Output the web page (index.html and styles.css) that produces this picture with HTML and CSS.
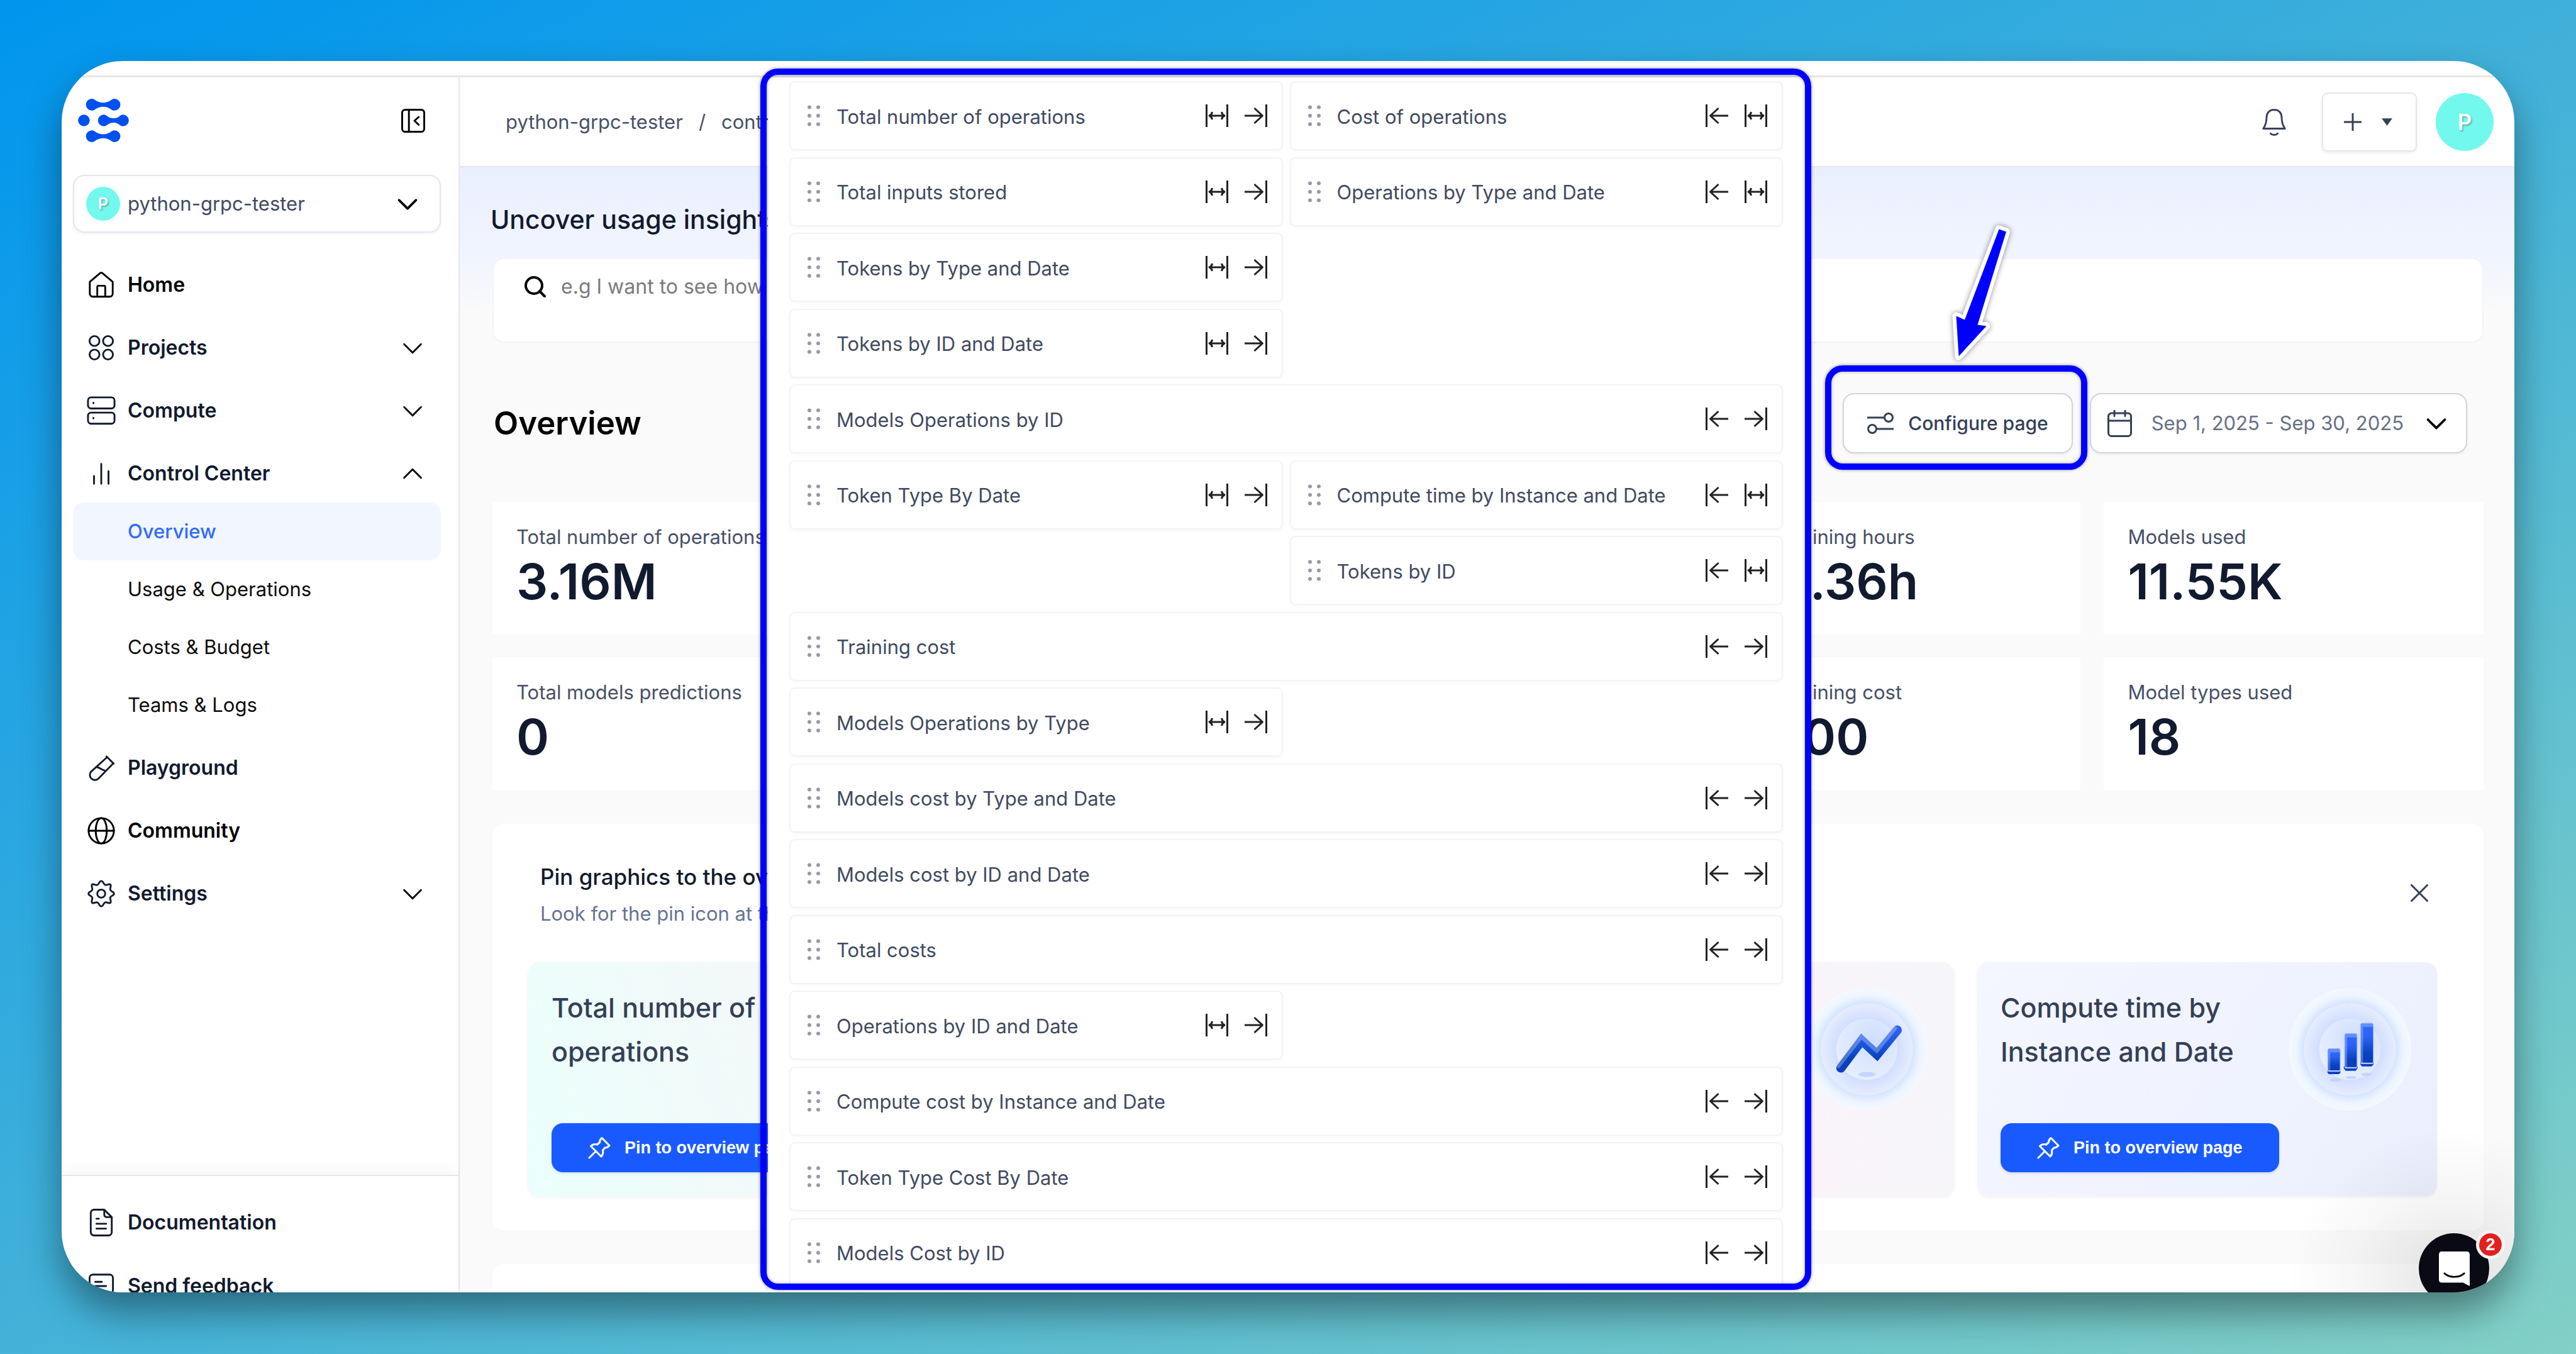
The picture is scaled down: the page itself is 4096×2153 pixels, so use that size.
FILE: index.html
```html
<!DOCTYPE html>
<html lang="en">
<head>
<meta charset="utf-8">
<meta name="viewport" content="width=device-width, initial-scale=1">
<title>Control Center – Overview</title>
<link rel="stylesheet" href="styles.css">
</head>
<body>
<svg class="sprite" aria-hidden="true">
  <symbol id="i-down" viewBox="0 0 24 24"><path d="M5 9l7 7 7-7"/></symbol>
  <symbol id="i-up" viewBox="0 0 24 24"><path d="M5 15.500l7-7 7 7"/></symbol>
  <symbol id="i-grip" viewBox="0 0 20 34"><g fill="#959aa4" stroke="none"><circle cx="3" cy="3.500" r="3"/><circle cx="17" cy="3.500" r="3"/><circle cx="3" cy="17" r="3"/><circle cx="17" cy="17" r="3"/><circle cx="3" cy="30.500" r="3"/><circle cx="17" cy="30.500" r="3"/></g></symbol>
  <symbol id="i-wide" viewBox="0 0 36 36"><path d="M1.500 0v36M34.500 0v36M6 18h24M10.500 12c-.5 3-2 5-4.500 6c2.500 1 4 3 4.500 6M25.500 12c.5 3 2 5 4.500 6c-2.500 1-4 3-4.500 6"/></symbol>
  <symbol id="i-right" viewBox="0 0 36 36"><path d="M34.500 0v36M0 18h28.500M15.500 6l13 12-13 12"/></symbol>
  <symbol id="i-left" viewBox="0 0 36 36"><path d="M1.500 0v36M36 18H7.500M20.500 6l-13 12 13 12"/></symbol>
  <symbol id="i-pin" viewBox="0 0 36 36"><path d="M2 34l9-9M22 2.500l12 12c-2 2.500-4.500 3.500-7 3.500l-3.500 4c.8 4.500 0 7.500-2.500 10L4.500 15.500c2.500-2.500 6-3.500 10-2.500L18.500 9.500c0-3 1.500-5.500 3.500-7z"/></symbol>
</svg>

<div class="desktop">
  <div class="window">
    <div class="strip"></div>
    <div class="app">

      <aside class="sidebar">
        <div class="brand">
          <a href="#" aria-label="Home page">
            <svg class="logo" viewBox="0 0 83 71">
              <path d="M22.500 0C28 0 30 6.500 41 6.500S54 0 59.500 0a9.700 9.700 0 0 1 0 19.400C54 19.400 52 13 41 13s-13 6.400-18.500 6.400a9.700 9.700 0 0 1 0-19.400z"/>
              <circle cx="9.500" cy="35.500" r="9.500"/>
              <path d="M42 26C47.500 26 48.500 32 58 32s10-6 15.500-6a9.500 9.500 0 0 1 0 19C68 45 67 39 58 39s-10.500 6-16 6a9.500 9.500 0 0 1 0-19z"/>
              <path d="M22.500 51.600c5.500 0 7.500 6.500 18.500 6.500s13-6.500 18.500-6.500a9.700 9.700 0 0 1 0 19.400C54 71 52 64.600 41 64.600S28 71 22.500 71a9.700 9.700 0 0 1 0-19.400z"/>
            </svg>
          </a>
          <button class="plain" aria-label="Collapse sidebar">
            <svg class="collapse" viewBox="0 0 39 39"><rect x="1.500" y="1.500" width="36" height="36" rx="5"/><path d="M12.500 2v35M28.500 13.500l-7 6 7 6.500"/></svg>
          </button>
        </div>

        <label class="workspace">
          <span class="avatar small">P</span>
          <select aria-label="Workspace"><option>python-grpc-tester</option></select>
          <svg class="icon bold"><use href="#i-down"/></svg>
        </label>

        <nav class="nav">
          <a class="nav-item ink" href="#"><svg class="icon" viewBox="0 0 24 24"><path d="M2.500 9.500v9.700c0 1.500 1 2.600 2.600 2.600h13.800c1.600 0 2.600-1.100 2.600-2.600V9.500L13 2.300q-1-.8-2 0zM8.700 21.800v-8.200q0-.9.900-.9h4.800q.9 0 .9.900v8.200"/></svg><span>Home</span></a>
          <button class="nav-item"><svg class="icon" viewBox="0 0 24 24"><circle cx="6.400" cy="6.400" r="4.100"/><circle cx="17.600" cy="6.400" r="4.100"/><circle cx="6.400" cy="17.600" r="4.100"/><circle cx="17.600" cy="17.600" r="4.100"/></svg><span>Projects</span><svg class="icon ink"><use href="#i-down"/></svg></button>
          <button class="nav-item"><svg class="icon" viewBox="0 0 24 24"><rect x="1" y="1" width="22" height="9.200" rx="2.600"/><rect x="1" y="13.600" width="22" height="9.200" rx="2.600"/><path d="M5.500 5.500v.4M5.500 18v.4"/></svg><span>Compute</span><svg class="icon ink"><use href="#i-down"/></svg></button>
          <div class="nav-group">
            <button class="nav-item"><svg class="icon" viewBox="0 0 24 24"><path d="M6 14v6.500M12 4v16.500M18 10v10.500"/></svg><span>Control Center</span><svg class="icon ink"><use href="#i-up"/></svg></button>
            <a class="nav-sub current" href="#">Overview</a>
            <a class="nav-sub" href="#">Usage &amp; Operations</a>
            <a class="nav-sub" href="#">Costs &amp; Budget</a>
            <a class="nav-sub" href="#">Teams &amp; Logs</a>
          </div>
          <a class="nav-item" href="#"><svg class="icon" viewBox="0 0 24 24"><path d="M16.300 2.500l6 6M17 3L3.500 15.200a4.200 4.200 0 0 0 5.800 6L22 8.200M8.500 11.500c2 0 3 1.800 6 2.500"/></svg><span>Playground</span></a>
          <a class="nav-item ink" href="#"><svg class="icon" viewBox="0 0 24 24"><circle cx="12" cy="12" r="10.500"/><ellipse cx="12" cy="12" rx="4.600" ry="10.500"/><path d="M1.500 12h21"/></svg><span>Community</span></a>
          <button class="nav-item"><svg class="icon" viewBox="0 0 24 24"><path d="M12 1.500c1.700 0 1.700 2.600 3.200 3.200s3.300-1.300 4.400-.2-.7 2.900-.1 4.400 3.100 1.400 3.100 3.100-2.500 1.600-3.100 3.100 1.200 3.300.1 4.400-2.900-.8-4.400-.2-1.500 3.200-3.200 3.200-1.700-2.600-3.200-3.200-3.300 1.300-4.400.2.700-2.900.1-4.400-3.100-1.400-3.100-3.100 2.500-1.600 3.100-3.100-1.200-3.300-.1-4.400 2.900.8 4.400.2S10.300 1.500 12 1.500z"/><circle cx="12" cy="12" r="3.300"/></svg><span>Settings</span><svg class="icon ink"><use href="#i-down"/></svg></button>
        </nav>

        <div class="nav-footer">
          <a class="nav-item" href="#"><svg class="icon" viewBox="0 0 24 24"><path d="M14.500 1.300H6A2.700 2.700 0 0 0 3.300 4v16A2.700 2.700 0 0 0 6 22.700h12a2.700 2.700 0 0 0 2.700-2.700V7.500zM14.500 1.500v4a2 2 0 0 0 2 2h4M8 8.800h2M8 13h8M8 17h8"/></svg><span>Documentation</span></a>
          <a class="nav-item" href="#"><svg class="icon" viewBox="0 0 24 24"><path d="M5 2.500h14a2.700 2.700 0 0 1 2.700 2.700v10a2.700 2.700 0 0 1-2.700 2.700h-6l-4.500 4v-4H5a2.700 2.700 0 0 1-2.700-2.700v-10A2.700 2.700 0 0 1 5 2.500zM7 8.500h5.500M7 12h9"/></svg><span>Send feedback</span></a>
        </div>
      </aside>

      <div class="content">
        <header class="topbar">
          <nav class="crumbs" aria-label="Breadcrumb"><a href="#">python-grpc-tester</a><span>/</span><a href="#">control-center</a></nav>
          <div class="top-actions">
            <button class="plain" aria-label="Notifications">
              <svg class="icon" viewBox="0 0 24 24"><path d="M12 1.800c-4.200 0-6.300 3-6.300 6.800 0 4.400-1 6.400-2.700 8.900h18c-1.700-2.500-2.700-4.500-2.700-8.900 0-3.800-2.100-6.800-6.300-6.800zM9 21.500c1.500 1.600 4.500 1.600 6 0"/></svg>
            </button>
            <button class="add" aria-label="Create new">
              <svg class="plus" viewBox="0 0 28 28"><path d="M14 0v28M0 14h28"/></svg>
              <svg class="caret" viewBox="0 0 18 12"><path d="M0 0h18L9 12z"/></svg>
            </button>
            <button class="plain" aria-label="Account"><span class="avatar large">P</span></button>
          </div>
        </header>

        <main class="page">
          <section class="ask">
            <h2>Uncover usage insights in seconds</h2>
            <label class="search">
              <svg viewBox="0 0 34 34"><circle cx="15" cy="15" r="13"/><path d="M24 24l8 8"/></svg>
              <textarea rows="1" placeholder="e.g I want to see how many operations ran last month" aria-label="Search usage"></textarea>
            </label>
          </section>

          <div class="toolbar">
            <h1>Overview</h1>
            <div class="tools">
              <button class="tool configure">
                <svg class="sliders" viewBox="0 0 42 34"><circle cx="34" cy="8" r="6.500"/><path d="M0 8h27"/><circle cx="8" cy="26" r="6.500"/><path d="M15 26h27"/></svg>
                <span>Configure page</span>
              </button>
              <button class="tool range">
                <svg class="calendar" viewBox="0 0 39 43"><rect x="1.500" y="5" width="36" height="36.500" rx="5"/><path d="M1.500 17h36M11 0v9.500M28 0v9.500"/></svg>
                <span>Sep 1, 2025 - Sep 30, 2025</span>
                <svg class="icon bold ink"><use href="#i-down"/></svg>
              </button>
            </div>
          </div>

          <section class="stats" aria-label="Key figures">
            <article class="stat"><p>Total number of operations</p><strong>3.16M</strong></article>
            <article class="stat"></article>
            <article class="stat"></article>
            <article class="stat"><p>Model training hours</p><strong>148.36h</strong></article>
            <article class="stat"><p>Models used</p><strong>11.55K</strong></article>
            <article class="stat"><p>Total models predictions</p><strong>0</strong></article>
            <article class="stat"></article>
            <article class="stat"></article>
            <article class="stat"><p>Model training cost</p><strong>$0.00</strong></article>
            <article class="stat"><p>Model types used</p><strong>18</strong></article>
          </section>

          <section class="pins">
            <div class="pins-head">
              <div>
                <h3>Pin graphics to the overview page</h3>
                <p>Look for the pin icon at the top of each graphic</p>
              </div>
              <button class="dismiss" aria-label="Dismiss"><svg class="close" viewBox="0 0 28 28"><path d="M1.500 1.500l25 25M26.500 1.500l-25 25"/></svg></button>
            </div>
            <div class="pin-cards">
              <article class="pin-card mint">
                <div class="pin-top"><h4>Total number of operations</h4></div>
                <button class="pin-button"><svg><use href="#i-pin"/></svg><span>Pin to overview page</span></button>
              </article>
              <article class="pin-card mint"></article>
              <article class="pin-card rose">
                <div class="pin-top">
                  <h4></h4>
                  <svg class="art" viewBox="0 0 200 200">
                    <defs>
                      <radialGradient id="ring-outer"><stop offset=".74" stop-color="#d3e3ff"/><stop offset=".88" stop-color="#eef5ff"/><stop offset="1" stop-color="#f4f9ff"/></radialGradient>
                      <radialGradient id="ring-mid"><stop offset=".62" stop-color="#cfdcff"/><stop offset="1" stop-color="#e6edff"/></radialGradient>
                      <radialGradient id="ring-core" cx=".6" cy=".35" r=".9"><stop offset="0" stop-color="#cfdeff"/><stop offset=".7" stop-color="#e6edff"/><stop offset="1" stop-color="#e2eaff"/></radialGradient>
                      <linearGradient id="blue" x1="0" y1="0" x2="0" y2="1"><stop offset="0" stop-color="#3069ff"/><stop offset=".35" stop-color="#2b62f5"/><stop offset=".75" stop-color="#0a40c0"/><stop offset="1" stop-color="#0a3db4"/></linearGradient>
                      <linearGradient id="trend" x1="0" y1="0" x2="0" y2="1"><stop offset="0" stop-color="#2d62ee"/><stop offset=".5" stop-color="#1550d6"/><stop offset=".75" stop-color="#0840bd"/></linearGradient>
                    </defs>
                    <circle cx="100" cy="100" r="100" fill="url(#ring-outer)"/>
                    <circle cx="100" cy="100" r="75" fill="url(#ring-mid)"/>
                    <circle cx="100" cy="100" r="50" fill="url(#ring-core)"/>
                    <ellipse cx="100" cy="141" rx="14" ry="4" fill="#c3d5fa"/>
                    <path d="M57.500 130.500L91.500 85.500 116.500 108.500 149.500 68.500" fill="none" stroke="url(#trend)" stroke-width="15" stroke-linecap="round" stroke-linejoin="miter" stroke-miterlimit="10"/>
                    <path d="M53.500 127.500L91 79.500 116 102.500 146 65.500" fill="none" stroke="#fff" stroke-opacity=".28" stroke-width="6.500" stroke-linecap="round" stroke-linejoin="miter" stroke-miterlimit="10"/>
                  </svg>
                </div>
              </article>
              <article class="pin-card sky">
                <div class="pin-top">
                  <h4>Compute time by Instance and Date</h4>
                  <svg class="art" viewBox="0 0 200 200">
                    <circle cx="100" cy="100" r="100" fill="url(#ring-outer)"/>
                    <circle cx="100" cy="100" r="75" fill="url(#ring-mid)"/>
                    <circle cx="100" cy="100" r="50" fill="url(#ring-core)"/>
                    <g fill="#c3d5fa"><ellipse cx="76" cy="150" rx="9" ry="3"/><ellipse cx="102" cy="146" rx="9" ry="2.500"/><ellipse cx="127" cy="141" rx="9" ry="2.500"/></g>
                    <g fill="#0a40c8"><path d="M63.500 135h21v3l-2 2.500h-17l-2-2.500z"/><path d="M90 128h22.500v3l-3 4h-16.500l-3-4z"/><path d="M117 121.500h21.500v3l-3 3.500h-16l-2.500-3.500z"/></g>
                    <g fill="url(#blue)" stroke="#7ea2ff" stroke-width="1"><rect x="64" y="99" width="20" height="37" rx="2.500"/><rect x="91.500" y="74.500" width="20" height="56" rx="2.500"/><rect x="117.500" y="57.500" width="20.500" height="66" rx="2.500"/></g>
                    <g fill="#fff" fill-opacity=".25"><path d="M64 136v-34q0-3 3-3h14q3 0 3 3v3H68v31z"/><path d="M91.500 130V77.500q0-3 3-3h14q3 0 3 3v3h-16V130z"/><path d="M117.500 123V60.500q0-3 3-3h14.500q3 0 3 3v3h-16.500V123z"/></g>
                    <path d="M65 135.300h18M92.500 130h18M118.500 122.800h18.500" stroke="#b9ccff" stroke-width="2"/>
                  </svg>
                </div>
                <button class="pin-button"><svg><use href="#i-pin"/></svg><span>Pin to overview page</span></button>
              </article>
            </div>
          </section>

          <section class="next-panel"></section>
        </main>
      </div>

      <div class="layout-panel" role="dialog" aria-label="Configure page">
        <ul class="tiles">
          <li class="tile"><svg class="grip"><use href="#i-grip"/></svg><span>Total number of operations</span><button aria-label="Full width"><svg><use href="#i-wide"/></svg></button><button aria-label="Move right"><svg><use href="#i-right"/></svg></button></li>
          <li class="tile second"><svg class="grip"><use href="#i-grip"/></svg><span>Cost of operations</span><button aria-label="Move left"><svg><use href="#i-left"/></svg></button><button aria-label="Full width"><svg><use href="#i-wide"/></svg></button></li>
          <li class="tile"><svg class="grip"><use href="#i-grip"/></svg><span>Total inputs stored</span><button aria-label="Full width"><svg><use href="#i-wide"/></svg></button><button aria-label="Move right"><svg><use href="#i-right"/></svg></button></li>
          <li class="tile second"><svg class="grip"><use href="#i-grip"/></svg><span>Operations by Type and Date</span><button aria-label="Move left"><svg><use href="#i-left"/></svg></button><button aria-label="Full width"><svg><use href="#i-wide"/></svg></button></li>
          <li class="tile"><svg class="grip"><use href="#i-grip"/></svg><span>Tokens by Type and Date</span><button aria-label="Full width"><svg><use href="#i-wide"/></svg></button><button aria-label="Move right"><svg><use href="#i-right"/></svg></button></li>
          <li class="tile"><svg class="grip"><use href="#i-grip"/></svg><span>Tokens by ID and Date</span><button aria-label="Full width"><svg><use href="#i-wide"/></svg></button><button aria-label="Move right"><svg><use href="#i-right"/></svg></button></li>
          <li class="tile full"><svg class="grip"><use href="#i-grip"/></svg><span>Models Operations by ID</span><button aria-label="Move left"><svg><use href="#i-left"/></svg></button><button aria-label="Move right"><svg><use href="#i-right"/></svg></button></li>
          <li class="tile"><svg class="grip"><use href="#i-grip"/></svg><span>Token Type By Date</span><button aria-label="Full width"><svg><use href="#i-wide"/></svg></button><button aria-label="Move right"><svg><use href="#i-right"/></svg></button></li>
          <li class="tile second"><svg class="grip"><use href="#i-grip"/></svg><span>Compute time by Instance and Date</span><button aria-label="Move left"><svg><use href="#i-left"/></svg></button><button aria-label="Full width"><svg><use href="#i-wide"/></svg></button></li>
          <li class="tile second"><svg class="grip"><use href="#i-grip"/></svg><span>Tokens by ID</span><button aria-label="Move left"><svg><use href="#i-left"/></svg></button><button aria-label="Full width"><svg><use href="#i-wide"/></svg></button></li>
          <li class="tile full"><svg class="grip"><use href="#i-grip"/></svg><span>Training cost</span><button aria-label="Move left"><svg><use href="#i-left"/></svg></button><button aria-label="Move right"><svg><use href="#i-right"/></svg></button></li>
          <li class="tile"><svg class="grip"><use href="#i-grip"/></svg><span>Models Operations by Type</span><button aria-label="Full width"><svg><use href="#i-wide"/></svg></button><button aria-label="Move right"><svg><use href="#i-right"/></svg></button></li>
          <li class="tile full"><svg class="grip"><use href="#i-grip"/></svg><span>Models cost by Type and Date</span><button aria-label="Move left"><svg><use href="#i-left"/></svg></button><button aria-label="Move right"><svg><use href="#i-right"/></svg></button></li>
          <li class="tile full"><svg class="grip"><use href="#i-grip"/></svg><span>Models cost by ID and Date</span><button aria-label="Move left"><svg><use href="#i-left"/></svg></button><button aria-label="Move right"><svg><use href="#i-right"/></svg></button></li>
          <li class="tile full"><svg class="grip"><use href="#i-grip"/></svg><span>Total costs</span><button aria-label="Move left"><svg><use href="#i-left"/></svg></button><button aria-label="Move right"><svg><use href="#i-right"/></svg></button></li>
          <li class="tile"><svg class="grip"><use href="#i-grip"/></svg><span>Operations by ID and Date</span><button aria-label="Full width"><svg><use href="#i-wide"/></svg></button><button aria-label="Move right"><svg><use href="#i-right"/></svg></button></li>
          <li class="tile full"><svg class="grip"><use href="#i-grip"/></svg><span>Compute cost by Instance and Date</span><button aria-label="Move left"><svg><use href="#i-left"/></svg></button><button aria-label="Move right"><svg><use href="#i-right"/></svg></button></li>
          <li class="tile full"><svg class="grip"><use href="#i-grip"/></svg><span>Token Type Cost By Date</span><button aria-label="Move left"><svg><use href="#i-left"/></svg></button><button aria-label="Move right"><svg><use href="#i-right"/></svg></button></li>
          <li class="tile full"><svg class="grip"><use href="#i-grip"/></svg><span>Models Cost by ID</span><button aria-label="Move left"><svg><use href="#i-left"/></svg></button><button aria-label="Move right"><svg><use href="#i-right"/></svg></button></li>
        </ul>
      </div>

      <div class="chat">
        <button class="launcher" aria-label="Open chat">
          <svg viewBox="0 0 50 56"><path class="bubble" d="M5 0h40q5 0 5 5v51l-11-5.500H5q-5 0-5-5V5q0-5 5-5z"/><path class="smile" d="M9 35.500c9 7.500 23 7.500 32 0"/></svg>
        </button>
        <span class="badge">2</span>
      </div>
    </div>
  </div>

  <div class="frame frame-panel"></div>
  <div class="frame frame-button"></div>
  <svg class="arrow" viewBox="0 0 110 230">
    <path d="M80.500 14.500L92 18.500 46.500 166.500 60.500 168.500 16.500 216.500 12.500 152.500 26 158.500z" fill="#00f" stroke="#fff" stroke-width="12" stroke-linejoin="round" paint-order="stroke"/>
  </svg>
</div>
</body>
</html>
```

FILE: styles.css
```css
*, *::before, *::after { box-sizing: border-box; }

body {
  margin: 0;
  font: 400 31px/46px Inter, "Liberation Sans", sans-serif;
  color: #344056;
}

h1, h2, h3, h4, p, ul { margin: 0; padding: 0; }
ul { list-style: none; }
a { color: inherit; text-decoration: none; }
button {
  margin: 0;
  padding: 0;
  border: 0;
  background: none;
  font: inherit;
  color: inherit;
  text-align: left;
  cursor: pointer;
}
svg {
  display: block;
  flex: none;
  fill: none;
  stroke: currentColor;
  stroke-linecap: round;
  stroke-linejoin: round;
}
.sprite { position: absolute; width: 0; height: 0; }
.plain { flex: none; }
.ink { color: #000; }

.icon { width: 46px; height: 46px; stroke-width: 1.5; }
.icon.bold { stroke-width: 2; }

/* backdrop */
.desktop {
  position: relative;
  height: 100vh;
  padding: 97px 98px 98px;
  overflow: hidden;
  background: linear-gradient(154deg, #0095ee, #41b1d9 50%, #82d0c6);
}
.window {
  display: flex;
  flex-direction: column;
  height: 100%;
  overflow: hidden;
  border-radius: 97px;
  background: #fff;
  box-shadow: 0 32px 60px rgba(0, 0, 0, .4);
}
.strip { flex: none; height: 26px; border-bottom: 3px solid #e4e4e4; }
.app { position: relative; display: flex; flex: 1; min-height: 0; }

/* sidebar */
.sidebar {
  display: flex;
  flex-direction: column;
  flex: none;
  width: 633px;
  border-right: 2px solid #e5e6ec;
}
.brand {
  display: flex;
  align-items: center;
  justify-content: space-between;
  padding: 34px 53px 0 26px;
}
.logo { width: 81px; height: 69px; fill: #0050f0; stroke: none; }
.collapse { width: 38px; height: 38px; stroke-width: 3; color: #000; }

.workspace {
  display: flex;
  align-items: center;
  gap: 12px;
  height: 92px;
  margin: 52px 28px 0 18px;
  padding: 0 28px 0 19px;
  border: 2px solid #e5e6ef;
  border-radius: 18px;
  box-shadow: 0 2px 4px rgba(16, 24, 40, .05);
  color: #000;
}
.workspace select {
  flex: 1;
  min-width: 0;
  padding: 0;
  border: 0;
  appearance: none;
  background: none;
  font: inherit;
  color: #3f4a60;
}
.avatar {
  display: grid;
  place-items: center;
  border-radius: 50%;
  background: #73f8ee;
  color: #fff;
  font-weight: 600;
  text-shadow: 2px 2px 2px rgba(0, 0, 0, .25);
}
.avatar.small { width: 54px; height: 54px; font-size: 26px; }
.avatar.large { width: 92px; height: 92px; font-size: 35px; }

.nav {
  display: flex;
  flex-direction: column;
  flex: 1;
  gap: 8px;
  min-height: 0;
  margin: 37px 28px 0 18px;
}
.nav-item {
  display: flex;
  align-items: center;
  gap: 19px;
  width: 100%;
  height: 92px;
  padding: 0 22px;
  font-size: 32px;
  font-weight: 600;
  color: #111a2e;
}
.nav-item.ink { color: #000; }
.nav-item span { flex: 1; }
.nav-sub {
  display: flex;
  align-items: center;
  height: 92px;
  padding-left: 87px;
  border-radius: 18px;
  color: #0c0c0c;
}
.nav-sub.current { background: #f1f6ff; color: #2f6bff; font-weight: 500; }
.nav-footer {
  flex: none;
  height: 187px;
  padding: 28px 28px 0 18px;
  overflow: hidden;
  border-top: 2px solid #e5e6ef;
  box-shadow: 0 -8px 20px rgba(0, 0, 0, .04);
}
.nav-footer .nav-item + .nav-item { margin-top: 9px; }

/* top bar */
.content { display: flex; flex-direction: column; flex: 1; min-width: 0; overflow: hidden; }
.topbar {
  display: flex;
  align-items: center;
  justify-content: space-between;
  flex: none;
  height: 143px;
  padding: 0 33px 0 73px;
  border-bottom: 2px solid #e5e6ec;
}
.crumbs { display: flex; gap: 25px; color: #475066; }
.top-actions { display: flex; align-items: center; }
.add {
  display: flex;
  align-items: center;
  gap: 32px;
  height: 94px;
  margin: 0 30px 0 53px;
  padding: 0 37px 0 33px;
  border: 2px solid #e5e6ec;
  border-radius: 9px;
  box-shadow: 0 2px 5px rgba(16, 24, 40, .08);
}
.plus { width: 28px; height: 28px; stroke-width: 3; }
.caret { width: 17px; height: 12px; fill: currentColor; stroke: none; }

/* page body */
.page {
  display: flex;
  flex-direction: column;
  flex: 1;
  min-height: 0;
  padding: 59px 49px 0 52px;
  background: linear-gradient(#e9effe 0, #f1f5fe 145px, #fafafa 235px);
}
h2 { font-size: 41px; line-height: 48px; font-weight: 500; color: #111a2e; }
.ask h2 { margin-left: -3px; }
.search {
  display: flex;
  gap: 24px;
  height: 135px;
  margin-top: 37px;
  padding: 21px 49px;
  border: 2px solid #f2f4fa;
  border-radius: 18px;
  background: #fff;
  color: #000;
}
.search svg { width: 34px; height: 34px; margin-top: 6px; stroke-width: 4; }
.search textarea {
  flex: 1;
  height: 46px;
  padding: 0;
  border: 0;
  resize: none;
  overflow: hidden;
  background: none;
  font: inherit;
  font-size: 32px;
  color: inherit;
}
.search textarea::placeholder { color: #7b7b7b; }

.toolbar {
  display: flex;
  align-items: center;
  justify-content: space-between;
  margin-top: 80px;
  padding: 0 26px 0 2px;
}
h1 { font-size: 51px; line-height: 64px; font-weight: 600; color: #000; }
.tools { display: flex; gap: 27px; }
.tool {
  display: flex;
  align-items: center;
  height: 96px;
  border: 2px solid #d0d5dd;
  border-radius: 18px;
  background: #fff;
  box-shadow: 0 2px 4px rgba(16, 24, 40, .05);
  white-space: nowrap;
}
.configure { gap: 23px; padding: 0 37px; font-size: 30px; font-weight: 500; }
.range { padding: 0 24px 0 26px; }
.range span { margin: 0 29px 0 31px; color: #667085; }
.sliders { width: 42px; height: 34px; stroke-width: 3; }
.calendar { width: 39px; height: 43px; stroke-width: 3; }

.stats {
  display: grid;
  grid-template-columns: repeat(5, 1fr);
  grid-auto-rows: 211px;
  gap: 36px 37px;
  margin-top: 77px;
}
.stat { padding: 33px 38px 0; background: #fff; color: #475066; white-space: nowrap; }
.stat strong { display: block; font-size: 79px; line-height: 94px; font-weight: 600; color: #111a2e; }

/* pin suggestions */
.pins {
  flex: none;
  margin-top: 54px;
  padding: 61px 74px 54px 57px;
  border-radius: 18px;
  background: #fff;
}
.pins-head {
  display: flex;
  align-items: flex-start;
  justify-content: space-between;
  padding: 0 14px 0 19px;
  color: #667391;
}
h3 { margin-bottom: 13px; font-size: 35px; line-height: 46px; font-weight: 500; color: #111a2e; }
.dismiss { margin-top: 35px; color: #344056; }
.close { width: 28px; height: 28px; stroke-width: 3; }
.pin-cards {
  display: grid;
  grid-template-columns: repeat(4, 1fr);
  gap: 37px;
  margin-top: 54px;
}
.pin-card {
  display: flex;
  flex-direction: column;
  justify-content: space-between;
  min-height: 372px;
  padding: 37px 37px 38px;
  border-radius: 18px;
  box-shadow: 0 2px 5px rgba(16, 24, 40, .06);
}
.mint { background: linear-gradient(70deg, #eafffb, #f4f8f9 60%, #fff2fa); }
.rose { background: linear-gradient(70deg, #fff1fa, #faf4fa 60%, #f5f6fa); }
.sky { background: linear-gradient(120deg, #f4f7ff, #f0f3ff 50%, #ebeffd); }
.pin-top { display: flex; justify-content: space-between; }
h4 { max-width: 400px; font-size: 43px; line-height: 70px; font-weight: 500; color: #344056; }
.art { width: 195px; height: 195px; margin: 4px 4px 0 0; stroke: none; }
.pin-button {
  display: flex;
  align-items: center;
  align-self: flex-start;
  gap: 22px;
  height: 78px;
  padding: 0 58px;
  border-radius: 18px;
  background: #195aff;
  box-shadow: 0 2px 4px rgba(16, 24, 40, .12);
  color: #fff;
  font: 700 27px/46px "Liberation Sans", Arial, sans-serif;
}
.pin-button svg { width: 36px; height: 36px; stroke-width: 3; }
.next-panel {
  flex: 1 0 45px;
  margin-top: 54px;
  border-radius: 18px 18px 0 0;
  background: #fff;
}

/* layout editor */
.layout-panel {
  position: absolute;
  top: 0;
  right: 1128px;
  bottom: 0;
  left: 1123px;
  padding: 6px 35px 8px 34px;
  background: #fff;
  box-shadow: 0 0 10px rgba(0, 0, 0, .12);
}
.tiles {
  display: grid;
  grid-template-columns: 1fr 1fr;
  grid-template-rows: repeat(16, 110px);
  align-content: space-between;
  column-gap: 11px;
  height: 100%;
}
.tile {
  display: flex;
  grid-column: 1;
  align-items: center;
  padding: 0 23px 0 27px;
  border: 2px solid #f2f3f8;
  border-radius: 9px;
  box-shadow: 0 2px 4px rgba(16, 24, 40, .03);
  color: #3f4a60;
}
.tile.second { grid-column: 2; }
.tile.full { grid-column: 1 / -1; }
.tile span { flex: 1; padding: 3px 0 0 26px; }
.tile .grip { width: 20px; height: 34px; }
.tile button { margin-left: 26px; color: #222; }
.tile button svg { width: 36px; height: 36px; stroke-width: 3; stroke-linecap: butt; }

/* chat launcher */
.chat {
  position: absolute;
  right: 20px;
  bottom: -18px;
  width: 132px;
  height: 112px;
}
.chat::before {
  content: "";
  position: absolute;
  right: -180px;
  bottom: -200px;
  width: 520px;
  height: 480px;
  background: radial-gradient(closest-side, rgba(0, 0, 0, .1), rgba(0, 0, 0, .03) 60%, rgba(0, 0, 0, 0));
  pointer-events: none;
}
.launcher {
  position: relative;
  display: grid;
  place-items: center;
  width: 112px;
  height: 112px;
  border-radius: 50%;
  background: #0a0a14;
}
.launcher svg { width: 49px; height: 55px; }
.bubble { fill: #fff; stroke: none; }
.smile { stroke: #0a0a14; stroke-width: 3; }
.badge {
  position: absolute;
  top: -5px;
  right: -5px;
  display: grid;
  place-items: center;
  width: 46px;
  height: 46px;
  border: 5px solid #f3f3f3;
  border-radius: 50%;
  background: #e32020;
  background-clip: padding-box;
  color: #fff;
  font: 700 27px/36px "Liberation Sans", Arial, sans-serif;
}

/* annotations drawn over the window */
.frame {
  position: absolute;
  border: 10px solid #00f;
  border-radius: 28px;
  box-shadow: 0 0 5px rgba(0, 0, 0, .45), inset 0 0 5px rgba(0, 0, 0, .35);
  pointer-events: none;
}
.frame-panel { top: 109px; right: 1216px; bottom: 102px; left: 1209px; }
.frame-button { top: 581px; right: 777px; width: 417px; height: 166px; }
.arrow {
  position: absolute;
  top: 350px;
  right: 888px;
  width: 110px;
  height: 230px;
  filter: drop-shadow(0 0 4px rgba(0, 0, 0, .45));
  pointer-events: none;
}
```
